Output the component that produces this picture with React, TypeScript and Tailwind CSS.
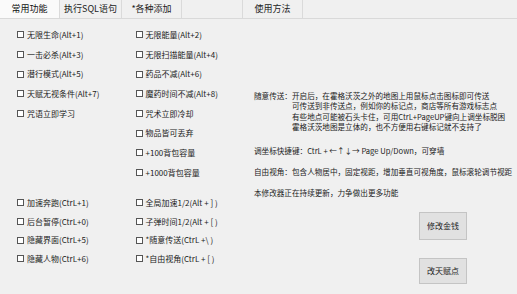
const group1Left = ["无限生命(Alt+1)", "一击必杀(Alt+3)", "潜行模式(Alt+5)", "天赋无视条件(Alt+7)", "咒语立即学习"];
const group1Right = [
  "无限能量(Alt+2)",
  "无限扫描能量(Alt+4)",
  "药品不减(Alt+6)",
  "魔药时间不减(Alt+8)",
  "咒术立即冷却",
  "物品皆可丢弃",
  "+100背包容量",
  "+1000背包容量",
];
const group2Left = ["加速奔跑(CtrL+1)", "后台暂停(CtrL+0)", "隐藏界面(CtrL+5)", "隐藏人物(CtrL+6)"];
const group2Right = ["全局加速1/2(Alt + ] )", "子弹时间1/2(Alt + [ )", "*随意传送(CtrL +\\ )", "*自由视角(CtrL + [ )"];

const tabs = [
  { label: "常用功能", w: "w-[60px]", active: true },
  { label: "执行SQL语句", w: "w-[62px]" },
  { label: "*各种添加", w: "w-[60px]" },
  { label: "", w: "w-[61px]" },
  { label: "使用方法", w: "w-[60px]" },
];

const Check = ({ label, h }: { label: string; h: string }) => (
  <div className={`flex items-center ${h}`}>
    <span className="w-[7px] h-[7px] border border-[#555] bg-white flex-shrink-0" />
    <span className="ml-[3px] text-[8px] text-[#222] whitespace-nowrap">{label}</span>
  </div>
);

const Column = ({ items, h }: { items: string[]; h: string }) => (
  <div className="flex flex-col w-[120px]">
    {items.map((t) => (
      <Check key={t} label={t} h={h} />
    ))}
  </div>
);

export default function App() {
  return (
    <div
      className="w-[517px] h-[294px] bg-[#f0f0f0] overflow-hidden text-[#1f1f1f]"
      style={{ fontFamily: '"Noto Sans CJK SC", "Noto Sans", sans-serif' }}
    >
      <div className="flex h-[19px] border-b border-[#d9d9d9]">
        {tabs.map((t, i) => (
          <div
            key={i}
            className={`${t.w} h-full flex items-center justify-center text-[9px] border-r border-[#dadada] ${
              t.active ? "bg-[#fafafa] text-[#111]" : "bg-[#f0f0f0] text-[#222]"
            }`}
          >
            {t.label}
          </div>
        ))}
      </div>

      <div className="flex pl-[17px]">
        <div className="w-[237px] pt-[6px]">
          <div className="flex">
            <Column items={group1Left} h="h-[19.7px]" />
            <Column items={group1Right} h="h-[19.7px]" />
          </div>
          <div className="flex mt-[11px]">
            <Column items={group2Left} h="h-[18.7px]" />
            <Column items={group2Right} h="h-[18.7px]" />
          </div>
        </div>

        <div className="flex-1 pt-[72px] text-[7.6px] text-[#222] whitespace-nowrap">
          <div className="flex leading-[10.3px]">
            <span>随意传送：</span>
            <div className="flex flex-col">
              <span>开启后，在霍格沃茨之外的地图上用鼠标点击图标即可传送</span>
              <span>可传送到非传送点，例如你的标记点，商店等所有游戏标志点</span>
              <span>有些地点可能被石头卡住，可用CtrL+PageUP键向上调坐标脱困</span>
              <span>霍格沃茨地图是立体的，也不方便用右键标记就不支持了</span>
            </div>
          </div>
          <div className="mt-[14px] leading-[10px]">调坐标快捷键：CtrL + ←↑↓→ Page Up/Down，可穿墙</div>
          <div className="mt-[11px] leading-[10px]">自由视角：包含人物居中，固定视距，增加垂直可视角度，鼠标滚轮调节视距</div>
          <div className="mt-[11px] leading-[10px]">本修改器正在持续更新，力争做出更多功能</div>
          <div className="flex flex-col items-start pl-[165px]">
            <button className="mt-[14px] w-[48px] h-[28px] bg-[#e1e1e1] border border-[#c4c4c4] text-[8px] text-[#222]">
              修改金钱
            </button>
            <button className="mt-[18px] w-[48px] h-[26px] bg-[#e1e1e1] border border-[#c4c4c4] text-[8px] text-[#222]">
              改天赋点
            </button>
          </div>
        </div>
      </div>
    </div>
  );
}
